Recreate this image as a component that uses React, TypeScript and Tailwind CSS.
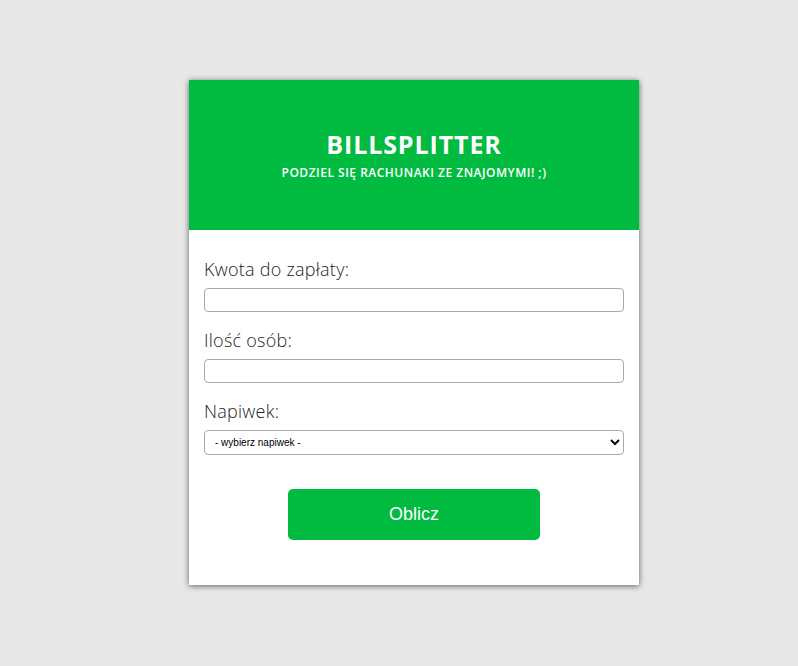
export default function App() {
    return (
        <div className="min-h-screen bg-[#e8e8e8] flex items-center justify-center pl-[30px] pb-[1px]">
            <div className="w-[450px] bg-white shadow-[0_1px_6px_rgba(0,0,0,0.6)]" style={{ fontFamily: "'Open Sans', 'Liberation Sans', sans-serif" }}>
                {/* Header */}
                <div className="h-[150px] pt-[3px] bg-[#00bb40] flex flex-col items-center justify-center text-white">
                    <h1 className="text-[25px] leading-7 font-bold tracking-[0.9px] mt-[-2px]">BILLSPLITTER</h1>
                    <p className="text-[12px] leading-4 font-semibold tracking-[0.5px] mt-[7px]">PODZIEL SIĘ RACHUNAKI ZE ZNAJOMYMI! ;)</p>
                </div>

                {/* Form */}
                <div className="pt-[29px] px-[15px] pb-[45px] flex flex-col">
                    <label className="text-[18px] leading-5 font-light tracking-[0.25px] text-[#222]">Kwota do zapłaty:</label>
                    <input type="number" className="mt-[9px] h-[24px] w-full border border-[#a9a9a9] rounded-[4px] outline-none" />

                    <label className="mt-[18px] text-[18px] leading-5 font-light tracking-[0.25px] text-[#222]">Ilość osób:</label>
                    <input type="number" className="mt-[9px] h-[24px] w-full border border-[#a9a9a9] rounded-[4px] outline-none" />

                    <label className="mt-[18px] text-[18px] leading-5 font-light tracking-[0.25px] text-[#222]">Napiwek:</label>
                    <select
                        className="mt-[9px] h-[25px] w-full border border-[#a9a9a9] rounded-[4px] pl-[6px] text-[10px] text-black bg-white"
                        style={{ fontFamily: "'Liberation Sans', Arial, sans-serif", appearance: "auto" }}
                        defaultValue=""
                    >
                        <option value="">- wybierz napiwek -</option>
                        <option value="0.05">5%</option>
                        <option value="0.1">10%</option>
                        <option value="0.15">15%</option>
                    </select>

                    <button
                        className="mt-[34px] self-center w-[252px] h-[51px] rounded-[5px] bg-[#00bb40] text-white text-[18px]"
                        style={{ fontFamily: "'Liberation Sans', Arial, sans-serif" }}
                    >
                        Oblicz
                    </button>
                </div>
            </div>
        </div>
    );
}
